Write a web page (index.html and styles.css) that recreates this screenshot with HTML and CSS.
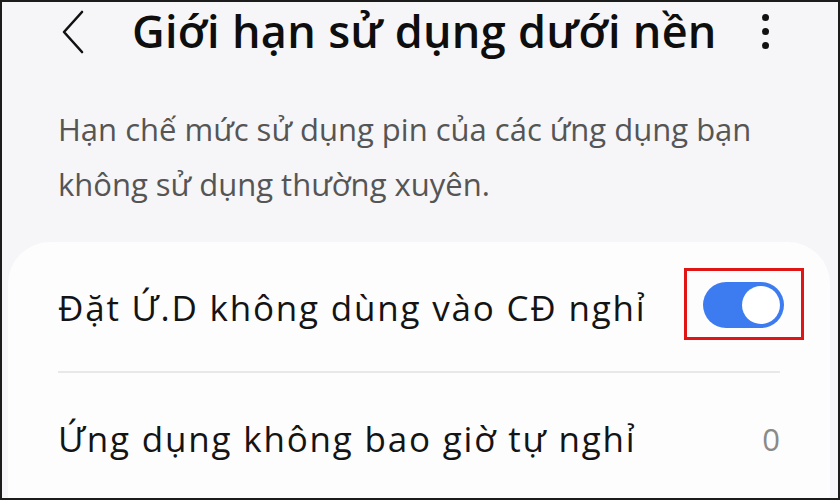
FILE: index.html
```html
<!DOCTYPE html>
<html lang="vi">
<head>
<meta charset="utf-8">
<link rel="stylesheet" href="styles.css">
</head>
<body>
<div class="screen">
  <header class="bar">
    <svg class="back" width="26" height="44" viewBox="0 0 26 44"><path d="M22 2 L4 22 L22 42" fill="none" stroke="#111" stroke-width="2.6" stroke-linecap="round" stroke-linejoin="round"/></svg>
    <h1 class="title">Giới hạn sử dụng dưới nền</h1>
    <div class="more"><span></span><span></span><span></span></div>
  </header>
  <p class="desc">Hạn chế mức sử dụng pin của các ứng dụng bạn không sử dụng thường xuyên.</p>
  <section class="card">
    <div class="row row1">
      <span class="label">Đặt Ứ.D không dùng vào CĐ nghỉ</span>
      <span class="toggle"><span class="knob"></span><span class="mark"></span></span>
    </div>
    <div class="divider"></div>
    <div class="row row2">
      <span class="label">Ứng dụng không bao giờ tự nghỉ</span>
      <span class="count">0</span>
    </div>
  </section>
</div>
</body>
</html>
```

FILE: styles.css
```css
html, body { margin: 0; padding: 0; }
body { width: 840px; height: 500px; overflow: hidden; font-family: "Open Sans", Roboto, sans-serif; }
.screen {
  box-sizing: border-box; width: 840px; height: 500px;
  border: 2px solid #1c1c1c; background: #f6f6f8;
  display: flex; flex-direction: column; overflow: hidden;
}
.bar { display: flex; align-items: center; height: 64px; padding: 0 0 0 58px; }
.back { flex: none; margin-top: 2px; }
.title { margin: 0 0 0 46px; font-size: 45px; font-weight: 600; color: #0e0e0e; letter-spacing: 0.3px; white-space: nowrap; line-height: 1.3; }
.more { display: flex; flex-direction: column; gap: 7px; margin-left: 45px; }
.more span { width: 7px; height: 7px; border-radius: 50%; background: #111; }
.desc { margin: 41px 40px 0 56px; font-size: 31px; line-height: 55px; color: #555; }
.card { margin: 30px 8px 0 6px; background: #fdfdfd; border-radius: 42px 42px 0 0; flex: 1; padding: 0 46px 0 50px; }
.row { display: flex; align-items: center; justify-content: space-between; box-sizing: border-box; }
.row1 { height: 129px; padding-top: 2px; }
.row2 { height: 132px; }
.label { font-size: 35px; color: #141414; white-space: nowrap; letter-spacing: 1.8px; }
.toggle { position: relative; width: 81px; height: 46px; border-radius: 23px; background: #3d7cf0; margin-top: -4px; }
.knob { position: absolute; right: 4px; top: 4px; width: 38px; height: 38px; border-radius: 50%; background: #fff; }
.mark { position: absolute; left: -19px; top: -14px; width: 114px; height: 66px; border: 3px solid #e01515; }
.divider { height: 2px; background: #e8e8ea; margin-right: 4px; }
.count { font-size: 31px; color: #8a8a8a; margin-right: 4px; }
```
